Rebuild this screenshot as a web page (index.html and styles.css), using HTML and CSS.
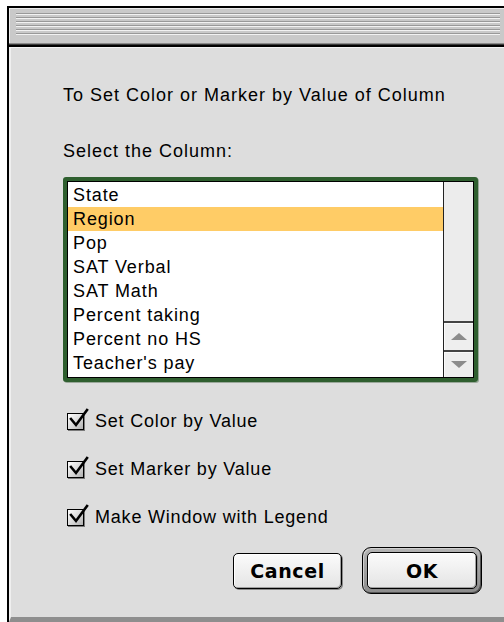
FILE: index.html
```html
<!DOCTYPE html>
<html lang="en">
<head>
<meta charset="utf-8">
<title>Color or Marker by Value</title>
<link rel="stylesheet" href="styles.css">
</head>
<body>
<div class="window">
  <div class="titlebar"><div class="stripes"></div></div>
  <div class="titlebar-edge"></div>
  <div class="content">
    <p class="prompt">To Set Color or Marker by Value of Column</p>
    <p class="caption">Select the Column:</p>

    <div class="listbox">
      <div class="listframe">
        <ul class="list">
          <li>State</li>
          <li class="selected">Region</li>
          <li>Pop</li>
          <li>SAT Verbal</li>
          <li>SAT Math</li>
          <li>Percent taking</li>
          <li>Percent no HS</li>
          <li>Teacher's pay</li>
        </ul>
        <div class="scrollbar">
          <div class="track"></div>
          <div class="arrow arrow-up"><span class="tri tri-up"></span></div>
          <div class="arrow arrow-down"><span class="tri tri-down"></span></div>
        </div>
      </div>
    </div>

    <div class="options">
      <div class="option">
        <span class="checkbox"><svg class="check" viewBox="0 0 26 26" width="26" height="26"><path d="M5 11 L10 17 L21 2" /></svg></span>
        <span class="option-label">Set Color by Value</span>
      </div>
      <div class="option">
        <span class="checkbox"><svg class="check" viewBox="0 0 26 26" width="26" height="26"><path d="M5 11 L10 17 L21 2" /></svg></span>
        <span class="option-label">Set Marker by Value</span>
      </div>
      <div class="option">
        <span class="checkbox"><svg class="check" viewBox="0 0 26 26" width="26" height="26"><path d="M5 11 L10 17 L21 2" /></svg></span>
        <span class="option-label">Make Window with Legend</span>
      </div>
    </div>

    <div class="buttons">
      <button class="btn" type="button">Cancel</button>
      <div class="default-ring"><button class="btn btn-ok" type="button">OK</button></div>
    </div>
  </div>
</div>
</body>
</html>
```

FILE: styles.css
```css
html, body {
  margin: 0;
  padding: 0;
  background: #ffffff;
}

body {
  width: 504px;
  height: 622px;
  overflow: hidden;
  font-family: "Liberation Sans", Arial, sans-serif;
  color: #000;
}

/* dialog window frame */
.window {
  margin: 6px 0 0 7px;
  width: 497px;
  border-left: 2px solid #000;
  border-top: 2px solid #000;
}

.titlebar {
  height: 35px;
  box-sizing: border-box;
  padding: 5px 0 0 7px;
  background: #c9c9c9;
  box-shadow: inset 1px 1px 0 #ececec;
}

.stripes {
  width: 484px;
  height: 22px;
  background: repeating-linear-gradient(
    to bottom,
    #999999 0px, #999999 1px,
    #f2f2f2 1px, #f2f2f2 2px,
    #c9c9c9 2px, #c9c9c9 4px
  );
}

.titlebar-edge {
  height: 4px;
  background: linear-gradient(to bottom, #8a8a8a 0, #8a8a8a 1px, #3a3a3a 1px, #3a3a3a 2px, #000 2px);
}

.content {
  box-sizing: border-box;
  height: 575px;
  padding: 36px 0 0 52px;
  background: #dddddd;
  border-top: 1px solid #f3f3f3;
  border-left: 2px solid #efefef;
  border-bottom: 5px solid #8e8e8e;
}

.prompt,
.caption {
  margin: 0;
  font-size: 18px;
  line-height: 22px;
  letter-spacing: 1px;
}

.caption {
  margin-top: 34px;
}

/* column list */
.listbox {
  margin-top: 15px;
  width: 415px;
  height: 205px;
  box-sizing: border-box;
  border: 4px solid #2f5f2f;
  border-radius: 3px;
  display: flex;
  box-shadow: 1px 1px 0 #9aa89a;
}

.listframe {
  flex: 1;
  display: flex;
  border: 1px solid #000;
}

.list {
  flex: 1;
  margin: 0;
  padding: 1px 0 0 0;
  list-style: none;
  background: #fff;
}

.list li {
  height: 24px;
  line-height: 24px;
  padding-left: 5px;
  font-size: 18px;
  letter-spacing: 0.9px;
}

.list li.selected {
  background: #ffcc66;
}

.scrollbar {
  width: 29px;
  border-left: 1px solid #222;
  display: flex;
  flex-direction: column;
  background: #eeeeee;
}

.track {
  flex: 1;
  background: #ececec;
}

.arrow {
  box-sizing: border-box;
  border-top: 2px solid #444;
  display: flex;
  align-items: center;
  justify-content: center;
  background: #eeeeee;
  box-shadow: inset 1px 1px 0 #fafafa;
}

.arrow-up {
  height: 29px;
}

.arrow-down {
  height: 27px;
}

.tri {
  width: 0;
  height: 0;
  border-left: 8px solid transparent;
  border-right: 8px solid transparent;
}

.tri-up {
  border-bottom: 7px solid #8c8c8c;
}

.tri-down {
  border-top: 7px solid #8c8c8c;
}

/* checkbox options */
.options {
  margin-top: 15px;
}

.option {
  height: 48px;
  display: flex;
  align-items: center;
  padding-left: 4px;
  gap: 11px;
}

.checkbox {
  position: relative;
  width: 17px;
  height: 17px;
  box-sizing: border-box;
  border: 1px solid #000;
  background: linear-gradient(135deg, #ffffff 0%, #d8d8d8 55%, #b0b0b0 100%);
  box-shadow: 1px 1px 0 #7a7a7a;
}

.check {
  position: absolute;
  left: -2px;
  top: -6px;
  overflow: visible;
}

.check path {
  fill: none;
  stroke: #000;
  stroke-width: 2.6;
  stroke-linecap: square;
  stroke-linejoin: miter;
}

.option-label {
  font-size: 18px;
  letter-spacing: 0.8px;
}

/* push buttons */
.buttons {
  margin-top: 6px;
  width: 419px;
  height: 47px;
  display: flex;
  align-items: center;
  justify-content: flex-end;
  gap: 20px;
}

.btn {
  box-sizing: border-box;
  width: 109px;
  height: 36px;
  padding: 0;
  border: 1px solid #000;
  border-radius: 5px;
  background: linear-gradient(to bottom, #fbfbfb 0%, #e4e4e4 100%);
  box-shadow: inset -1px -1px 0 #a0a0a0, inset 1px 1px 0 #ffffff, 1px 1px 0 #8a8a8a;
  font-family: "DejaVu Sans", sans-serif;
  font-weight: bold;
  font-size: 19px;
  letter-spacing: 0.6px;
  color: #000;
}

.default-ring {
  box-sizing: border-box;
  width: 120px;
  height: 47px;
  padding: 4px;
  border: 1px solid #000;
  border-radius: 9px;
  background: linear-gradient(to bottom, #b4b4b4, #8c8c8c);
  box-shadow: inset 1px 1px 0 #d0d0d0, inset -1px -1px 0 #555;
  display: flex;
}

.btn-ok {
  width: 100%;
  height: 100%;
}
```
